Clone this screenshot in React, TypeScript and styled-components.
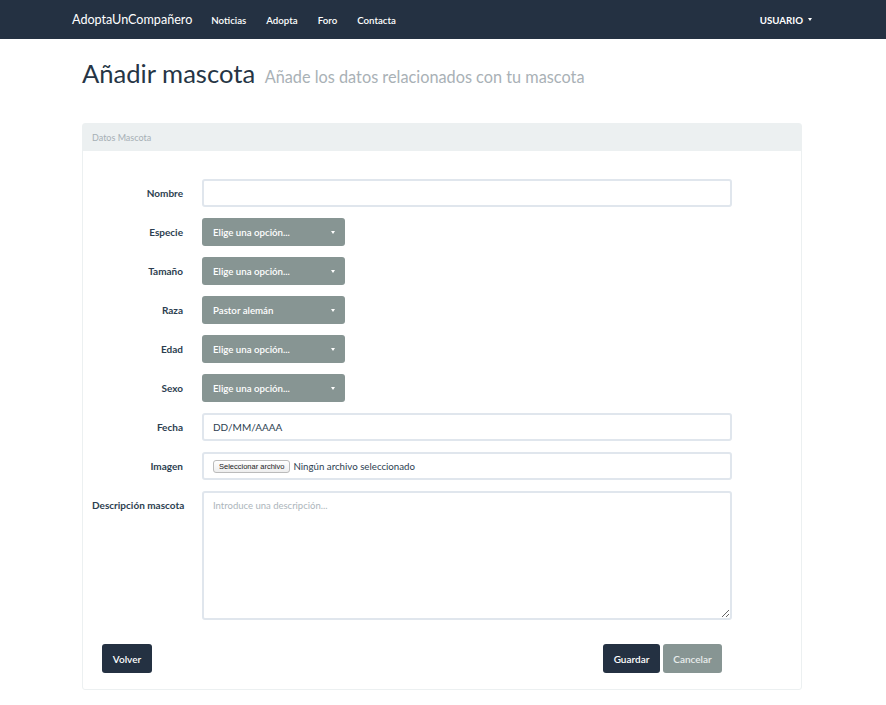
import React from "react";
import styled, { createGlobalStyle } from "styled-components";

const GlobalStyle = createGlobalStyle`
  html, body { margin: 0; padding: 0; background: #fff; }
  body { font-family: Lato, "Open Sans", "Noto Sans", sans-serif; color: #2c3e50; }
  * { box-sizing: border-box; }
`;

const DARK = "#243142";
const GRAY = "#879593";

const Navbar = styled.nav`
  height: 39px;
  background: ${DARK};
  display: flex;
  align-items: center;
  padding: 0 74px 0 72px;
`;

const Brand = styled.a`
  color: #fff;
  font-size: 12.6px;
  margin-right: 19px;
  text-decoration: none;
`;

const NavLink = styled.a`
  color: #fff;
  font-size: 9.7px;
  font-weight: 600;
  margin-right: 20px;
  text-decoration: none;
`;

const Spacer = styled.div`
  flex: 1;
`;

const Caret = styled.span<{ $color?: string }>`
  display: inline-block;
  width: 0;
  height: 0;
  border-left: 2.5px solid transparent;
  border-right: 2.5px solid transparent;
  border-top: 3px solid ${(p) => p.$color || "#fff"};
  margin-left: 5px;
  vertical-align: middle;
`;

const UserMenu = styled.a`
  color: #fff;
  font-size: 9.7px;
  font-weight: 700;
  text-transform: uppercase;
  display: flex;
  align-items: center;
`;

const Container = styled.main`
  padding: 0 84px 0 82px;
`;

const PageHeader = styled.header`
  padding-top: 17px;
  height: 84px;
`;

const Title = styled.h1`
  margin: 0;
  font-size: 25.6px;
  font-weight: 400;
  line-height: 34px;
  color: #263545;
`;

const Subtitle = styled.small`
  font-size: 16.3px;
  color: #a9b1b6;
  margin-left: 3px;
`;

const Panel = styled.section`
  border: 1px solid #ecf0f1;
  border-radius: 3px;
  width: 720px;
`;

const PanelHeading = styled.div`
  height: 27px;
  background: #ecf0f1;
  display: flex;
  align-items: center;
  padding: 0 9px;
  font-size: 9px;
  color: #a6afb5;
`;

const PanelBody = styled.div`
  padding: 28px 9px 16px 9px;
`;

const Form = styled.div`
  display: grid;
  grid-template-columns: 91px 530px;
  column-gap: 19px;
  row-gap: 11px;
  align-items: start;
`;

const Label = styled.label`
  font-size: 10px;
  font-weight: 700;
  text-align: right;
  line-height: 28px;
  color: #2c3e50;
  white-space: nowrap;
`;

const TextInput = styled.input`
  height: 28px;
  width: 100%;
  border: 2px solid #e0e6ed;
  border-radius: 3px;
  padding: 0 9px;
  font-family: inherit;
  font-size: 10px;
  color: #2c3e50;
  outline: none;
`;

const FileBox = styled.div`
  height: 28px;
  border: 2px solid #e0e6ed;
  border-radius: 3px;
  padding: 0 9px;
  display: flex;
  align-items: center;
  font-size: 9.7px;
  color: #2c3e50;
`;

const FileButton = styled.span`
  font-family: "Liberation Sans", Arial, sans-serif;
  font-size: 7.5px;
  color: #222;
  border: 1px solid #bbb;
  border-radius: 3px;
  background: linear-gradient(#fff, #eee);
  padding: 1px 5px;
  margin-right: 3px;
`;

const TextArea = styled.textarea`
  width: 100%;
  height: 129px;
  border: 2px solid #e0e6ed;
  border-radius: 3px;
  padding: 7px 9px;
  font-family: inherit;
  font-size: 9.5px;
  color: #2c3e50;
  outline: none;
  &::placeholder { color: #acb5bb; }
`;

const SelectButton = styled.button`
  width: 143px;
  height: 28px;
  background: ${GRAY};
  border: none;
  border-radius: 3px;
  color: #fff;
  font-family: inherit;
  font-size: 9.7px;
  font-weight: 600;
  padding: 0 10px 0 11px;
  display: flex;
  align-items: center;
  justify-content: space-between;
  text-align: left;
`;

const Actions = styled.div`
  display: flex;
  justify-content: space-between;
  align-items: center;
  margin-top: 24px;
  padding: 0 70px 0 10px;
`;

const Group = styled.div`
  display: flex;
  gap: 3px;
`;

const Button = styled.button<{ $variant?: "dark" | "gray"; $w: number }>`
  height: 29px;
  width: ${(p) => p.$w}px;
  border: none;
  border-radius: 3px;
  background: ${(p) => (p.$variant === "gray" ? GRAY : DARK)};
  color: ${(p) => (p.$variant === "gray" ? "#e8eceb" : "#fff")};
  font-family: inherit;
  font-size: 10px;
  font-weight: 600;
  padding: 0;
`;

const selects: [string, string][] = [
  ["Especie", "Elige una opción..."],
  ["Tamaño", "Elige una opción..."],
  ["Raza", "Pastor alemán"],
  ["Edad", "Elige una opción..."],
  ["Sexo", "Elige una opción..."],
];

export default function App() {
  return (
    <>
      <GlobalStyle />
      <Navbar>
        <Brand>AdoptaUnCompañero</Brand>
        <NavLink>Noticias</NavLink>
        <NavLink>Adopta</NavLink>
        <NavLink>Foro</NavLink>
        <NavLink>Contacta</NavLink>
        <Spacer />
        <UserMenu>
          Usuario <Caret />
        </UserMenu>
      </Navbar>
      <Container>
        <PageHeader>
          <Title>
            Añadir mascota <Subtitle>Añade los datos relacionados con tu mascota</Subtitle>
          </Title>
        </PageHeader>
        <Panel>
          <PanelHeading>Datos Mascota</PanelHeading>
          <PanelBody>
            <Form>
              <Label>Nombre</Label>
              <TextInput />
              {selects.map(([label, value]) => (
                <React.Fragment key={label}>
                  <Label>{label}</Label>
                  <div>
                    <SelectButton>
                      <span>{value}</span>
                      <Caret />
                    </SelectButton>
                  </div>
                </React.Fragment>
              ))}
              <Label>Fecha</Label>
              <TextInput defaultValue="DD/MM/AAAA" />
              <Label>Imagen</Label>
              <FileBox>
                <FileButton>Seleccionar archivo</FileButton>
                Ningún archivo seleccionado
              </FileBox>
              <Label>Descripción mascota</Label>
              <TextArea placeholder="Introduce una descripción..." />
            </Form>
            <Actions>
              <Button $w={50}>Volver</Button>
              <Group>
                <Button $w={57}>Guardar</Button>
                <Button $w={59} $variant="gray">Cancelar</Button>
              </Group>
            </Actions>
          </PanelBody>
        </Panel>
      </Container>
    </>
  );
}
